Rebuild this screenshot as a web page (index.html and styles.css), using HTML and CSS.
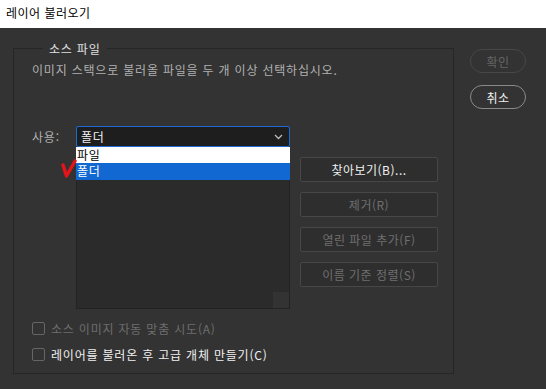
FILE: index.html
```html
<!DOCTYPE html>
<html lang="ko">
<head>
    <meta charset="UTF-8">
    <title>레이어 불러오기</title>
    <link rel="stylesheet" href="styles.css">
</head>
<body>

    <div class="titlebar">레이어 불러오기</div>

    <div class="dialog">
        <fieldset class="source">
            <legend>소스 파일</legend>
            <p class="hint">이미지 스택으로 불러올 파일을 두 개 이상 선택하십시오.</p>

            <div class="use-row">
                <span class="use-label">사용:</span>
                <div class="select">
                    <span>폴더</span>
                    <svg class="chevron" width="9" height="6" viewBox="0 0 9 6"><path d="M1 1 L4.5 4.5 L8 1" fill="none" stroke="#bbb" stroke-width="1.3"/></svg>
                </div>
            </div>

            <div class="files">
                <div class="list-wrap">
                    <div class="list"><div class="corner"></div></div>
                    <ul class="popup">
                        <li>파일</li>
                        <li class="picked">폴더</li>
                    </ul>
                    <svg class="mark" width="16" height="20" viewBox="0 0 16 20"><path d="M2 6 L5.5 17 L14 2" fill="none" stroke="#e3151b" stroke-width="3.4" stroke-linecap="round" stroke-linejoin="round"/></svg>
                </div>
                <div class="actions">
                    <button class="btn">찾아보기(B)...</button>
                    <button class="btn off">제거(R)</button>
                    <button class="btn off">열린 파일 추가(F)</button>
                    <button class="btn off">이름 기준 정렬(S)</button>
                </div>
            </div>

            <label class="check-row off"><span class="box"></span>소스 이미지 자동 맞춤 시도(A)</label>
            <label class="check-row"><span class="box"></span>레이어를 불러온 후 고급 개체 만들기(C)</label>
        </fieldset>

        <div class="side">
            <button class="pill off">확인</button>
            <button class="pill">취소</button>
        </div>
    </div>

</body>
</html>
```

FILE: styles.css
```css
body {
    margin: 0;
    background-color: #333333;
    font-family: "Noto Sans CJK KR", "Noto Sans", sans-serif;
    font-size: 12px;
    letter-spacing: 0.8px;
    color: #e6e6e6;
}
.titlebar {
    height: 28px;
    line-height: 26px;
    padding-left: 6px;
    letter-spacing: 0.5px;
    background-color: #ffffff;
    color: #000;
}
.dialog {
    display: flex;
    align-items: flex-start;
    padding: 12px 0 0 13px;
}
.source {
    margin: 0;
    width: 441px;
    padding: 0 0 12px 18px;
    border: 1px solid #262626;
    box-sizing: border-box;
}
.source legend {
    margin-left: 11px;
    padding: 0 6px;
    line-height: 17px;
    color: #e0e0e0;
}
.hint {
    margin: 4px 0 0;
    line-height: 17px;
    color: #b0b0b0;
}
.use-row {
    display: flex;
    align-items: center;
    margin-top: 48px;
}
.use-label {
    width: 44px;
    color: #b0b0b0;
}
.select {
    box-sizing: border-box;
    width: 214px;
    height: 21px;
    display: flex;
    align-items: center;
    justify-content: space-between;
    padding: 0 6px 0 4px;
    background-color: #1e1e1e;
    border: 1px solid #1d6ad4;
    border-radius: 2px;
    color: #f0f0f0;
}
.files {
    display: flex;
    align-items: flex-start;
    margin-left: 44px;
}
.list-wrap {
    position: relative;
}
.list {
    box-sizing: border-box;
    width: 214px;
    height: 162px;
    background-color: #2b2b2b;
    border: 1px solid #232323;
    display: flex;
    justify-content: flex-end;
    align-items: flex-end;
}
.corner {
    width: 16px;
    height: 16px;
    background-color: #333333;
}
.popup {
    position: absolute;
    left: 0;
    top: 0;
    width: 214px;
    margin: 0;
    padding: 0;
    list-style: none;
    background-color: #ffffff;
}
.popup li {
    height: 16px;
    line-height: 16px;
    padding-left: 1px;
    color: #000;
}
.popup li.picked {
    height: 17px;
    background-color: #1268d2;
    color: #fff;
}
.mark {
    position: absolute;
    left: -15px;
    top: 12px;
}
.actions {
    display: flex;
    flex-direction: column;
    gap: 10px;
    margin: 10px 0 0 10px;
}
.btn {
    width: 138px;
    height: 25px;
    padding: 0;
    font-family: inherit;
    font-size: 12px;
    letter-spacing: 0.5px;
    background-color: #2e2e2e;
    border: 1px solid #474747;
    border-radius: 2px;
    color: #f0f0f0;
}
.btn.off {
    color: #6e6e6e;
}
.check-row {
    display: flex;
    align-items: center;
    gap: 6px;
    height: 14px;
    margin-top: 12px;
    color: #f0f0f0;
}
.check-row + .check-row {
    margin-top: 12px;
}
.check-row.off {
    color: #6e6e6e;
}
.box {
    box-sizing: border-box;
    width: 13px;
    height: 13px;
    border: 1px solid #666;
    border-radius: 2px;
}
.side {
    display: flex;
    flex-direction: column;
    gap: 12px;
    margin: 9px 0 0 16px;
}
.pill {
    width: 56px;
    height: 24px;
    padding: 0;
    font-family: inherit;
    font-size: 12px;
    letter-spacing: 0.5px;
    background: none;
    border: 1px solid #8a8a8a;
    border-radius: 12px;
    color: #eeeeee;
}
.pill.off {
    border-color: #474747;
    color: #666;
}
```
